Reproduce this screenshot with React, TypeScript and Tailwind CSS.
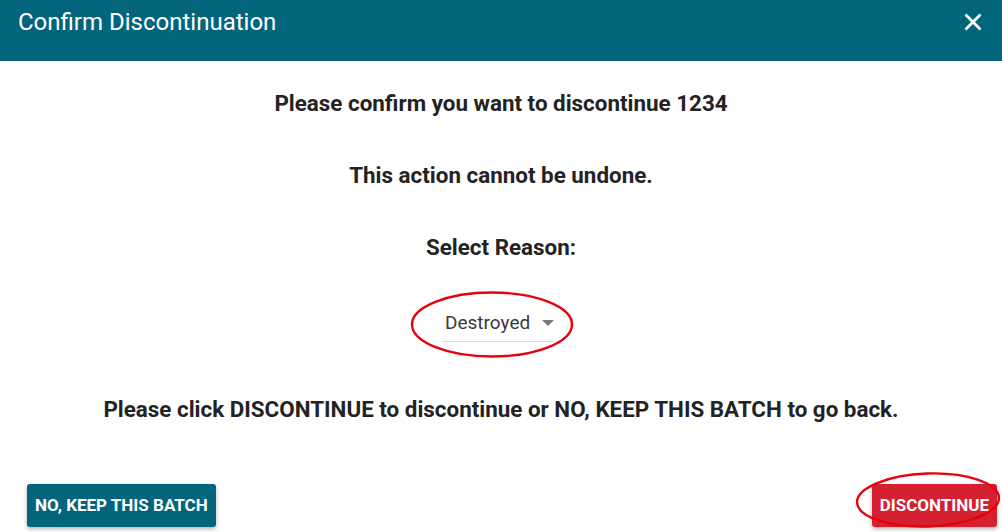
export default function App() {
  return (
    <div
      className="relative w-[1002px] h-[532px] bg-white overflow-hidden flex flex-col"
      style={{ fontFamily: "Roboto, 'Noto Sans', sans-serif" }}
    >
      {/* Header */}
      <div className="h-[61px] bg-[#02657c] flex items-start justify-between pt-[8px] pl-[18px] pr-[19px] shrink-0">
        <h1 className="text-white text-[24px] leading-7 font-normal">Confirm Discontinuation</h1>
        <svg width="20" height="20" viewBox="0 0 20 20" className="mt-[4px]">
          <path d="M2.5 2.5 L17.5 17.5 M17.5 2.5 L2.5 17.5" stroke="white" strokeWidth="2.8" />
        </svg>
      </div>

      {/* Body */}
      <div className="flex flex-col items-center text-[#232323] text-[22.4px] font-bold leading-7 pt-[28px]">
        <p>Please confirm you want to discontinue 1234</p>
        <p className="mt-[44px]">This action cannot be undone.</p>
        <p className="mt-[44px]">Select Reason:</p>

        <div className="relative mt-[43px] mr-[6px]">
          <div className="w-[112px] h-[38px] border-b border-[#dcdcdc] flex items-center justify-between pl-[3px] font-normal text-[19px] text-[#3a3a3a]">
            <span>Destroyed</span>
            <svg width="12" height="6" viewBox="0 0 12 6">
              <path d="M0 0 L12 0 L6 6 Z" fill="#7a7a7a" />
            </svg>
          </div>
          <svg
            className="absolute left-[-32px] top-[-13px] pointer-events-none"
            width="164"
            height="67"
            viewBox="0 0 164 67"
          >
            <ellipse cx="82" cy="33.5" rx="80" ry="32" fill="none" stroke="#e8000a" strokeWidth="2.4" />
          </svg>
        </div>

        <p className="mt-[53px]">
          Please click DISCONTINUE to discontinue or NO, KEEP THIS BATCH to go back.
        </p>
      </div>

      {/* Footer */}
      <div className="mt-auto mb-[5px] flex items-center justify-between pl-[27px] pr-[5px]">
        <button className="h-[43px] px-[8px] bg-[#02657c] text-white font-bold text-[17px] rounded-[3px] shadow-[0_2px_4px_rgba(0,0,0,0.3)]">
          NO, KEEP THIS BATCH
        </button>
        <div className="relative">
          <button className="h-[43px] px-[8px] bg-[#d42030] text-white font-bold text-[17px] rounded-[3px] shadow-[0_2px_4px_rgba(0,0,0,0.3)]">
            DISCONTINUE
          </button>
          <svg
            className="absolute left-[-17px] top-[-12px] pointer-events-none"
            width="146"
            height="57"
            viewBox="0 0 146 57"
          >
            <ellipse cx="73" cy="28" rx="71" ry="26.5" fill="none" stroke="#e8000a" strokeWidth="2.4" transform="rotate(-2 73 28)" />
          </svg>
        </div>
      </div>
    </div>
  );
}
